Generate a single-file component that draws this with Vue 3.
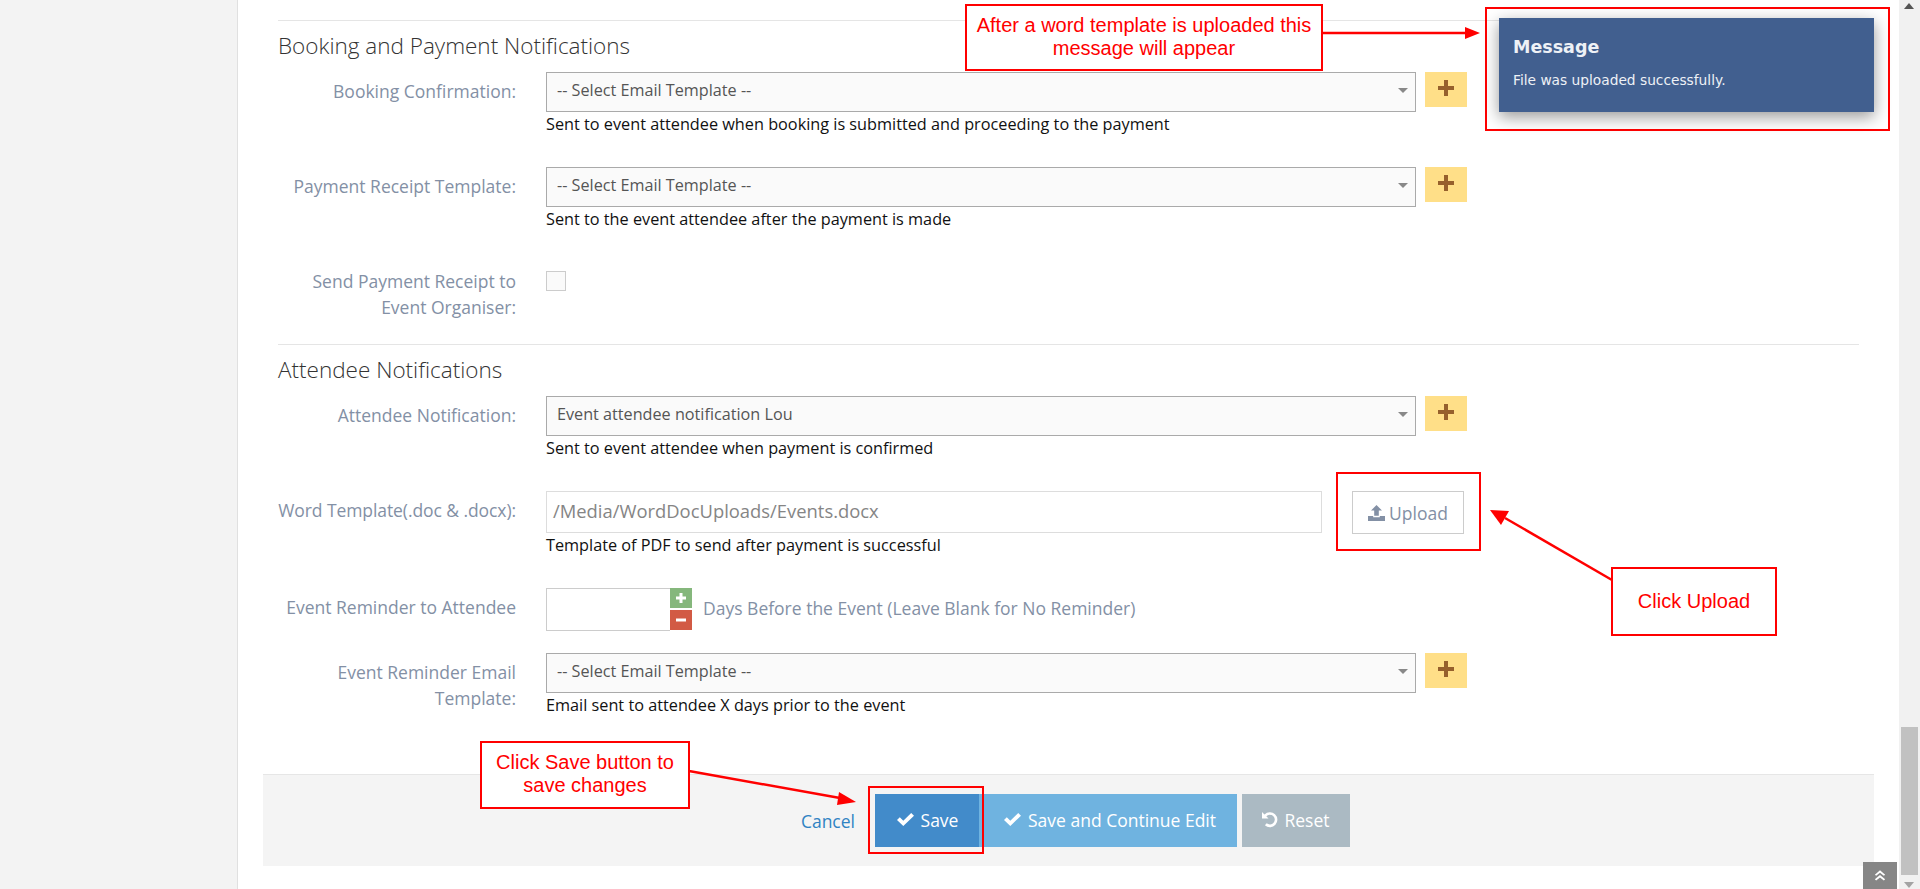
<script setup>
const emailPlaceholder = '-- Select Email Template --'
</script>

<template>
  <div class="page">
    <aside class="side"></aside>
    <main class="main">
      <form class="form" @submit.prevent>
        <hr class="rule" />
        <h3 class="heading">Booking and Payment Notifications</h3>
        <div class="row">
          <label class="label">Booking Confirmation:</label>
          <div class="field">
            <div class="line">
              <div class="select">{{ emailPlaceholder }}<i class="caret"></i></div>
              <button class="add" type="button"><svg viewBox="0 0 16 16" class="plus"><path d="M6 0h4v6h6v4h-6v6H6v-6H0V6h6z" /></svg></button>
            </div>
            <p class="help">Sent to event attendee when booking is submitted and proceeding to the payment</p>
          </div>
        </div>
        <div class="row">
          <label class="label">Payment Receipt Template:</label>
          <div class="field">
            <div class="line">
              <div class="select">{{ emailPlaceholder }}<i class="caret"></i></div>
              <button class="add" type="button"><svg viewBox="0 0 16 16" class="plus"><path d="M6 0h4v6h6v4h-6v6H6v-6H0V6h6z" /></svg></button>
            </div>
            <p class="help">Sent to the event attendee after the payment is made</p>
          </div>
        </div>
        <div class="row row-check">
          <label class="label">Send Payment Receipt to Event Organiser:</label>
          <div class="field"><span class="check"></span></div>
        </div>
        <hr class="rule" />
        <h3 class="heading">Attendee Notifications</h3>
        <div class="row">
          <label class="label">Attendee Notification:</label>
          <div class="field">
            <div class="line">
              <div class="select">Event attendee notification Lou<i class="caret"></i></div>
              <button class="add" type="button"><svg viewBox="0 0 16 16" class="plus"><path d="M6 0h4v6h6v4h-6v6H6v-6H0V6h6z" /></svg></button>
            </div>
            <p class="help">Sent to event attendee when payment is confirmed</p>
          </div>
        </div>
        <div class="row">
          <label class="label label-word">Word Template(.doc &amp; .docx):</label>
          <div class="field">
            <div class="line line-path">
              <div class="path">/Media/WordDocUploads/Events.docx</div>
              <button class="upload" type="button">
                <svg viewBox="0 0 17 16" class="upload-icon"><path d="M8.500 0l5.500 5.500h-3.200v5.200H6.200V5.500H3zM0 11h5.200v1.300h6.600V11H17v5H0z" /></svg>
                Upload
              </button>
            </div>
            <p class="help">Template of PDF to send after payment is successful</p>
          </div>
        </div>
        <div class="row row-spin">
          <label class="label">Event Reminder to Attendee</label>
          <div class="field spin-line">
            <div class="spin-input"></div>
            <div class="spin-btns">
              <span class="spin up"><svg viewBox="0 0 12 12"><path d="M4.500 1h3v3.500H11v3H7.500V11h-3V7.500H1v-3h3.500z" /></svg></span>
              <span class="spin down"><svg viewBox="0 0 12 12"><path d="M1 4.500h10v3H1z" /></svg></span>
            </div>
            <span class="days">Days Before the Event (Leave Blank for No Reminder)</span>
          </div>
        </div>
        <div class="row row-last">
          <label class="label">Event Reminder Email Template:</label>
          <div class="field">
            <div class="line">
              <div class="select">{{ emailPlaceholder }}<i class="caret"></i></div>
              <button class="add" type="button"><svg viewBox="0 0 16 16" class="plus"><path d="M6 0h4v6h6v4h-6v6H6v-6H0V6h6z" /></svg></button>
            </div>
            <p class="help">Email sent to attendee X days prior to the event</p>
          </div>
        </div>
      </form>
      <div class="actions">
        <a class="cancel">Cancel</a>
        <button class="btn btn-save" type="button"><svg viewBox="0 0 17 13" class="tick"><path d="M0 7l2.800-2.700 3.500 3.400L14.200 0 17 2.700 6.300 13z" /></svg>Save</button>
        <button class="btn btn-cont" type="button"><svg viewBox="0 0 17 13" class="tick"><path d="M0 7l2.800-2.700 3.500 3.400L14.200 0 17 2.700 6.300 13z" /></svg>Save and Continue Edit</button>
        <button class="btn btn-reset" type="button"><svg viewBox="0 0 17 17" class="undo"><path d="M0 1v6.500h6.500L4.300 5.200A4.900 4.900 0 1 1 4.700 12.300l-1.800 2A7.500 7.500 0 1 0 2.500 3.500z" /></svg>Reset</button>
      </div>
    </main>
    <div class="scrollbar">
      <span class="arrow arrow-up"></span>
      <span class="thumb"></span>
      <span class="arrow arrow-down"></span>
    </div>

    <div class="toast-frame"></div>
    <div class="toast">
      <div class="toast-title">Message</div>
      <div class="toast-body">File was uploaded successfully.</div>
    </div>
    <div class="callout call-msg">After a word template is uploaded this<br />message will appear</div>
    <div class="callout call-upload">Click Upload</div>
    <div class="callout call-save">Click Save button to<br />save changes</div>
    <div class="frame frame-upload"></div>
    <div class="frame frame-save"></div>
    <svg class="arrows" viewBox="0 0 1920 889">
      <g stroke="#f00" stroke-width="2.500" fill="none">
        <path d="M1322 33H1468" />
        <path d="M1612 580L1505 518" />
        <path d="M689 771L840 798" />
      </g>
      <g fill="#f00">
        <path d="M1480 33l-15-6v12z" />
        <path d="M1490 510l19 1-8 14z" />
        <path d="M856 802l-17-10-2 13z" />
      </g>
    </svg>
    <a class="totop"><svg viewBox="0 0 14 12"><path d="M7 0l6 5-1.500 1.400L7 2.700 2.500 6.400 1 5zM7 5.500l6 5-1.500 1.400L7 8.200l-4.500 3.700L1 10.500z" /></svg></a>
  </div>
</template>

<style>
html, body { margin: 0; overflow: hidden; background: #fff; }
</style>

<style scoped>
.page {
  position: relative;
  display: flex;
  width: 1920px;
  height: 889px;
  overflow: hidden;
  font-family: "Open Sans", "Liberation Sans", sans-serif;
  background: #fff;
}
.side {
  width: 237px;
  flex: none;
  background: #f3f3f3;
  border-right: 1px solid #e0e0e0;
}
.main { flex: 1; min-width: 0; padding: 0 25px; }
.form { padding: 20px 15px 0; height: 754px; box-sizing: border-box; }
.rule { height: 1px; margin: 0; border: 0; background: #e5e5e5; }
.heading {
  height: 51px;
  margin: 0;
  padding-top: 10px;
  box-sizing: border-box;
  font-size: 22.500px;
  line-height: 30px;
  font-weight: 300;
  color: #333;
}
.row {
  display: grid;
  grid-template-columns: 238px 1fr;
  column-gap: 30px;
  margin-bottom: 33px;
}
.row-check { margin-bottom: 24px; }
.row-spin { margin-bottom: 22px; }
.row-last { margin-bottom: 0; }
.label {
  padding-top: 6px;
  font-size: 17.500px;
  line-height: 26px;
  text-align: right;
  color: #8390a5;
}
.label-word { white-space: nowrap; justify-self: end; letter-spacing: -0.080px; }
.line { display: flex; align-items: flex-start; }
.line-path { height: 42px; }
.select {
  position: relative;
  width: 870px;
  height: 40px;
  box-sizing: border-box;
  padding-left: 10px;
  border: 1px solid #aaa;
  background: #fafafa;
  font-size: 16.200px;
  line-height: 34px;
  color: #555;
}
.caret {
  position: absolute;
  right: 7px;
  top: 15px;
  border: 5px solid transparent;
  border-top: 5px solid #888;
  border-bottom: 0;
}
.add {
  width: 42px;
  height: 35px;
  margin-left: 9px;
  padding: 0 0 4px;
  border: 0;
  display: flex;
  align-items: center;
  justify-content: center;
  background: #ffdf88;
}
.plus { width: 16px; height: 16px; fill: #96602c; }
.help { margin: 2px 0 0; font-size: 16.250px; line-height: 20px; color: #111; }
.check {
  display: block;
  width: 20px;
  height: 20px;
  box-sizing: border-box;
  margin-top: 9px;
  border: 1px solid #ccc;
  background: #fafafa;
}
.path {
  width: 776px;
  height: 42px;
  box-sizing: border-box;
  padding-left: 6px;
  border: 1px solid #ddd;
  font-size: 18.400px;
  line-height: 38px;
  color: #858585;
}
.upload {
  display: flex;
  align-items: center;
  justify-content: center;
  gap: 4px;
  width: 112px;
  height: 43px;
  margin-left: 30px;
  padding: 0;
  box-sizing: border-box;
  border: 1px solid #ccc;
  background: #fff;
  font-family: inherit;
  font-size: 17.500px;
  color: #8390a5;
}
.upload-icon { width: 17px; height: 16px; fill: #8390a5; }
.spin-line { display: flex; align-items: flex-start; }
.spin-input {
  width: 124px;
  height: 43px;
  box-sizing: border-box;
  border: 1px solid #ccc;
  border-right: 0;
}
.spin-btns { display: flex; flex-direction: column; gap: 2px; }
.spin { display: flex; align-items: center; justify-content: center; width: 22px; height: 20px; }
.spin svg { width: 12px; height: 12px; fill: #fff; }
.up { background: #85b77c; }
.down { background: #d25a44; }
.days { margin-left: 11px; font-size: 17.500px; line-height: 40px; color: #8390a5; }
.actions {
  display: flex;
  align-items: center;
  justify-content: flex-end;
  margin-top: 20px;
  padding: 19px 524px 19px 0;
  border-top: 1px solid #e6e6e6;
  background: #f4f4f4;
}
.cancel { font-size: 17.500px; color: #2f83c3; margin-right: 20px; }
.btn {
  display: flex;
  align-items: center;
  justify-content: center;
  height: 53px;
  padding: 0 0 2px;
  border: 0;
  font-family: inherit;
  font-size: 17.500px;
  color: #fff;
}
.btn-save { width: 104px; padding-left: 1px; background: #428bca; }
.btn-cont { width: 258px; padding-left: 4px; background: #6fb3e0; }
.btn-reset { width: 108px; margin-left: 5px; background: #abbac3; }
.tick { width: 17px; height: 13px; margin-right: 7px; fill: #fff; }
.undo { width: 17px; height: 17px; margin-right: 5px; fill: #fff; }
.scrollbar {
  position: relative;
  width: 21px;
  flex: none;
  background: #f1f1f1;
}
.thumb { position: absolute; left: 2px; top: 727px; width: 17px; height: 148px; background: #c1c1c1; }
.arrow { position: absolute; left: 5px; border: 5px solid transparent; }
.arrow-up { top: 3px; border-top: 0; border-bottom: 6px solid #555; }
.arrow-down { bottom: 1px; border-bottom: 0; border-top: 6px solid #a3a3a3; }
.toast-frame {
  position: absolute;
  left: 1485px;
  top: 7px;
  width: 405px;
  height: 124px;
  box-sizing: border-box;
  border: 2px solid #f00;
}
.toast {
  position: absolute;
  left: 1499px;
  top: 18px;
  width: 375px;
  height: 94px;
  box-sizing: border-box;
  padding: 18px 14px;
  background: #415f8f;
  box-shadow: 0 5px 15px rgba(0, 0, 0, 0.4);
  color: #eef1f6;
  font-family: "DejaVu Sans", sans-serif;
}
.toast-title { font-size: 17.500px; line-height: 22px; font-weight: 700; }
.toast-body { margin-top: 13px; font-size: 13.750px; line-height: 18px; }
.callout {
  position: absolute;
  box-sizing: border-box;
  display: flex;
  align-items: center;
  justify-content: center;
  border: 2px solid #f00;
  background: #fff;
  color: #f00;
  font-family: "Liberation Sans", Arial, sans-serif;
  font-size: 20px;
  line-height: 23px;
  text-align: center;
}
.call-msg { left: 965px; top: 4px; width: 358px; height: 67px; padding-bottom: 2px; }
.call-upload { left: 1611px; top: 567px; width: 166px; height: 69px; }
.call-save { left: 480px; top: 741px; width: 210px; height: 68px; padding-bottom: 2px; }
.frame { position: absolute; box-sizing: border-box; border: 2px solid #f00; }
.frame-upload { left: 1336px; top: 472px; width: 145px; height: 79px; }
.frame-save { left: 868px; top: 786px; width: 116px; height: 68px; }
.arrows { position: absolute; left: 0; top: 0; width: 1920px; height: 889px; pointer-events: none; }
.totop {
  position: absolute;
  left: 1863px;
  top: 862px;
  width: 34px;
  height: 27px;
  display: flex;
  align-items: center;
  justify-content: center;
  background: #868686;
}
.totop svg { width: 12px; height: 11px; fill: #fff; }
</style>
